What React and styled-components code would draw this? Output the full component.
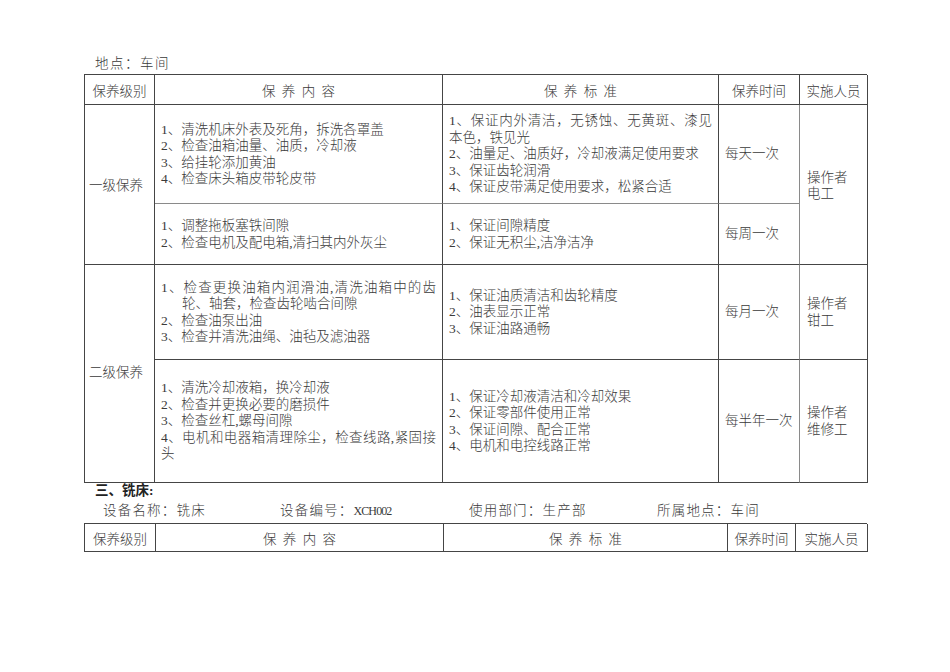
import React from 'react';
import styled, { createGlobalStyle } from 'styled-components';

const GlobalStyle = createGlobalStyle`
  html, body {
    margin: 0;
    padding: 0;
    background: #ffffff;
  }
  body {
    font-family: "Liberation Serif", "Noto Sans CJK SC", serif;
    color: #3a3a3a;
  }
`;

const LINE = '#454545';
const SOFT = '#8a8a8a';

const Page = styled.div`
  width: 950px;
  min-height: 672px;
  box-sizing: border-box;
  padding: 54px 83px 0 84px;
  font-size: 13.5px;
  font-weight: 300;
`;

const Place = styled.div`
  padding-left: 11px;
  line-height: 20px;
  letter-spacing: 1.5px;
`;

const SectionTitle = styled.div`
  padding-left: 11px;
  line-height: 16px;
  height: 16px;
  font-weight: 700;
  color: #222;
`;

const InfoRow = styled.div`
  display: grid;
  grid-template-columns: 177px 189px 188px 1fr;
  padding-left: 19px;
  height: 24px;
  line-height: 24px;
  letter-spacing: 1.2px;
`;

const Code = styled.span`
  font-size: 12px;
  font-weight: 400;
  letter-spacing: -0.9px;
`;

const Table = styled.div`
  display: grid;
  grid-template-columns: ${({ $cols }) => $cols};
  grid-template-rows: ${({ $rows }) => $rows};
  border-top: 1px solid ${LINE};
  border-left: 1px solid ${LINE};
`;

const Cell = styled.div`
  box-sizing: border-box;
  display: flex;
  flex-direction: column;
  justify-content: center;
  align-items: ${({ $center }) => ($center ? 'center' : 'stretch')};
  padding: ${({ $pad }) => $pad || '1px 6px 0 6px'};
  border-right: 1px solid ${({ $softRight }) => ($softRight ? SOFT : LINE)};
  border-bottom: 1px solid ${({ $softBottom }) => ($softBottom ? SOFT : LINE)};
  grid-row: ${({ $span }) => ($span ? `span ${$span}` : 'auto')};
  min-width: 0;
`;

const HeadText = styled.span`
  white-space: nowrap;
  word-spacing: ${({ $spaced }) => ($spaced ? '3px' : '0')};
`;

const Line = styled.div`
  line-height: 16.4px;
  white-space: ${({ $justify }) => ($justify ? 'normal' : 'nowrap')};
  text-align: ${({ $justify }) => ($justify ? 'justify' : 'left')};
  text-align-last: ${({ $justify }) => ($justify ? 'justify' : 'auto')};
  padding-left: ${({ $indent }) => ($indent ? '21px' : '0')};
`;

const Lines = ({ items }) =>
  items.map((l, i) =>
    typeof l === 'string' ? (
      <Line key={i}>{l}</Line>
    ) : (
      <Line key={i} $justify={l.justify} $indent={l.indent}>
        {l.text}
      </Line>
    )
  );

const headers = [
  { text: '保养级别' },
  { text: '保 养 内 容', spaced: true },
  { text: '保 养 标 准', spaced: true },
  { text: '保养时间' },
  { text: '实施人员' },
];

const groups = [
  {
    level: '一级保养',
    person: ['操作者', '电工'],
    rows: [
      {
        content: [
          '1、清洗机床外表及死角，拆洗各罩盖',
          '2、检查油箱油量、油质，冷却液',
          '3、给挂轮添加黄油',
          '4、检查床头箱皮带轮皮带',
        ],
        standard: [
          { text: '1、保证内外清洁，无锈蚀、无黄斑、漆见', justify: true },
          '本色，铁见光',
          '2、油量足、油质好，冷却液满足使用要求',
          '3、保证齿轮润滑',
          '4、保证皮带满足使用要求，松紧合适',
        ],
        time: '每天一次',
      },
      {
        content: ['1、调整拖板塞铁间隙', '2、检查电机及配电箱,清扫其内外灰尘'],
        standard: ['1、保证间隙精度', '2、保证无积尘,洁净洁净'],
        time: '每周一次',
      },
    ],
  },
  {
    level: '二级保养',
    person: ['操作者', '钳工'],
    rows: [
      {
        content: [
          { text: '1、检查更换油箱内润滑油,清洗油箱中的齿', justify: true },
          { text: '轮、轴套，检查齿轮啮合间隙', indent: true },
          '2、检查油泵出油',
          '3、检查并清洗油绳、油毡及滤油器',
        ],
        standard: ['1、保证油质清洁和齿轮精度', '2、油表显示正常', '3、保证油路通畅'],
        time: '每月一次',
      },
      {
        content: [
          '1、清洗冷却液箱，换冷却液',
          '2、检查并更换必要的磨损件',
          '3、检查丝杠,螺母间隙',
          { text: '4、电机和电器箱清理除尘，检查线路,紧固接', justify: true },
          '头',
        ],
        standard: [
          '1、保证冷却液清洁和冷却效果',
          '2、保证零部件使用正常',
          '3、保证间隙、配合正常',
          '4、电机和电控线路正常',
        ],
        time: '每半年一次',
        person: ['操作者', '维修工'],
      },
    ],
  },
];

const HeaderRow = () =>
  headers.map((h, i) => (
    <Cell key={i} $center $pad="0">
      <HeadText $spaced={h.spaced}>{h.text}</HeadText>
    </Cell>
  ));

const renderGroup = (g, gi) => {
  const cells = [];
  if (gi === 0) {
    cells.push(
      <Cell key="lv" $span={2} $pad="3px 4px 0 4px">
        <Line>{g.level}</Line>
      </Cell>
    );
    g.rows.forEach((r, ri) => {
      cells.push(
        <Cell key={`c${ri}`} $softBottom={ri === 0}>
          <Lines items={r.content} />
        </Cell>,
        <Cell key={`s${ri}`} $softBottom={ri === 0}>
          <Lines items={r.standard} />
        </Cell>,
        <Cell key={`t${ri}`} $softBottom={ri === 0} $softRight>
          <Line>{r.time}</Line>
        </Cell>
      );
      if (ri === 0) {
        cells.push(
          <Cell key="p" $span={2} $pad="3px 6px 0 7px">
            <Lines items={g.person} />
          </Cell>
        );
      }
    });
  } else {
    cells.push(
      <Cell key="lv" $span={2} $pad="0 4px 0 4px">
        <Line>{g.level}</Line>
      </Cell>
    );
    g.rows.forEach((r, ri) => {
      cells.push(
        <Cell key={`c${ri}`}>
          <Lines items={r.content} />
        </Cell>,
        <Cell key={`s${ri}`}>
          <Lines items={r.standard} />
        </Cell>,
        <Cell key={`t${ri}`} $softRight>
          <Line>{r.time}</Line>
        </Cell>,
        <Cell key={`p${ri}`} $pad="1px 6px 0 7px">
          <Lines items={r.person || g.person} />
        </Cell>
      );
    });
  }
  return <React.Fragment key={gi}>{cells}</React.Fragment>;
};

export default function App() {
  return (
    <>
      <GlobalStyle />
      <Page>
        <Place>地点：车间</Place>
        <Table $cols="70px 288px 276px 81px 68px" $rows="30px 99px 61px 95px 123px">
          <HeaderRow />
          {groups.map(renderGroup)}
        </Table>
        <SectionTitle>三、铣床:</SectionTitle>
        <InfoRow>
          <span>设备名称：铣床</span>
          <span>
            设备编号：<Code>XCH002</Code>
          </span>
          <span>使用部门：生产部</span>
          <span>所属地点：车间</span>
        </InfoRow>
        <Table $cols="71px 288px 284px 68px 72px" $rows="28px">
          <HeaderRow />
        </Table>
      </Page>
    </>
  );
}
